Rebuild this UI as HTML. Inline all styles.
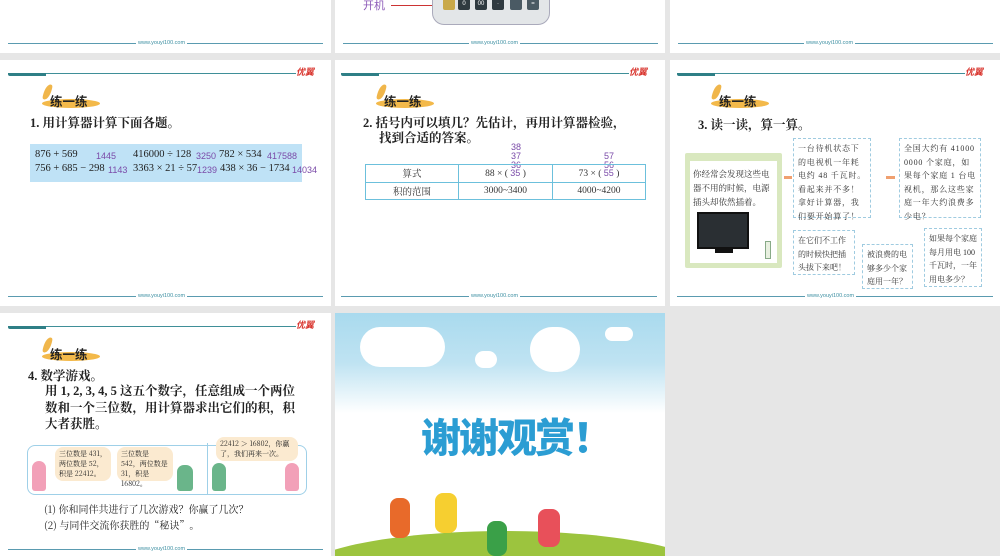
<!DOCTYPE html>
<html><head><meta charset="utf-8">
<style>
*{margin:0;padding:0;box-sizing:border-box}
body{width:1000px;height:556px;background:#e6e6e6;position:relative;overflow:hidden;font-family:"Liberation Serif","Noto Serif CJK SC",serif;color:#222}
.s{position:absolute;background:#fff;overflow:hidden}
.a{position:absolute;white-space:nowrap}
.hl{position:absolute;height:1px;background:#3f8f98}
.ht{position:absolute;height:3px;background:#2e7f86;border-radius:0 0 0 2px}
.logo{position:absolute;font:italic bold 9px "Liberation Sans","Noto Sans CJK SC",sans-serif;color:#d8312a}
.ft{position:absolute;font:5.5px "Liberation Sans",sans-serif;color:#3c8fa2;background:#fff;padding:0 2px}
.fl{position:absolute;height:1px;background:#5a9bb0}
.bdg{position:absolute;width:60px;height:28px}
.bdg .e{position:absolute;left:0;top:17px;width:58px;height:9px;border-radius:50%;background:#f3b94a}
.bdg .f{position:absolute;left:2px;top:2px;width:7px;height:16px;background:#f0b64b;border-radius:70% 20% 70% 20%;transform:rotate(15deg)}
.bdg .t{position:absolute;left:8px;top:9px;font:bold 12.5px "Liberation Sans","Noto Sans CJK SC",sans-serif;color:#222}
.ti{font:bold 12.5px "Liberation Serif","Noto Serif CJK SC",serif}
.pu{color:#7a4aa8;font:9px "Liberation Sans",sans-serif}
.n{font-size:10.5px}
.bub{position:absolute;background:#fff;border:1px dashed #9fcbe0;font:8px "Liberation Serif","Noto Serif CJK SC",serif;line-height:13.5px;padding:3px 4px;color:#333;white-space:normal;word-break:break-all;letter-spacing:0.8px}
.key{position:absolute;top:-2px;width:12px;height:12px;background:#2f3a40;border-radius:2px;color:#fff;font:6px sans-serif;text-align:center;line-height:12px}
.sp{position:absolute;background:#fbead0;border-radius:8px;font:7px 'Noto Serif CJK SC',serif;line-height:10px;padding:2px 4px;white-space:normal}
</style></head><body>

<!-- row0 -->
<div class="s" style="left:0;top:0;width:331px;height:53px">
 <div class="fl" style="left:8px;top:43px;width:315px"></div>
 <div class="ft" style="left:136px;top:40px">www.youyi100.com</div>
</div>
<div class="s" style="left:335px;top:0;width:330px;height:53px">
 <div class="a" style="left:28px;top:-3px;font:11px 'Noto Sans CJK SC',sans-serif;color:#8c5ab8">开机</div>
 <div class="a" style="left:56px;top:5px;width:50px;height:1px;background:#c33"></div>
 <div class="a" style="left:97px;top:-8px;width:118px;height:33px;background:#e3e6e8;border-radius:0 0 12px 12px;border:1px solid #aab"></div>
 <div class="key" style="left:108px;background:#c9a94a"></div>
 <div class="key" style="left:123px">0</div>
 <div class="key" style="left:140px">00</div>
 <div class="key" style="left:157px">·</div>
 <div class="key" style="left:175px;background:#4a5a64"></div>
 <div class="key" style="left:192px;background:#4a5a64">=</div>
 <div class="fl" style="left:8px;top:43px;width:315px"></div>
 <div class="ft" style="left:134px;top:40px">www.youyi100.com</div>
</div>
<div class="s" style="left:670px;top:0;width:330px;height:53px">
 <div class="fl" style="left:8px;top:43px;width:315px"></div>
 <div class="ft" style="left:134px;top:40px">www.youyi100.com</div>
</div>

<!-- row1 col1 -->
<div class="s" style="left:0;top:60px;width:331px;height:246px">
 <div class="hl" style="left:8px;top:13px;width:288px"></div>
 <div class="ht" style="left:8px;top:13px;width:38px"></div>
 <div class="logo" style="left:296px;top:5px">优翼</div>
 <div class="bdg" style="left:42px;top:22px"><div class="e"></div><div class="f"></div><div class="t">练一练</div></div>
 <div class="a ti" style="left:30px;top:53px">1. 用计算器计算下面各题。</div>
 <div class="a" style="left:30px;top:84px;width:272px;height:38px;background:#bfe2f6"></div>
 <div class="a n" style="left:35px;top:89px">876 + 569</div>
 <div class="a pu" style="left:96px;top:91px">1445</div>
 <div class="a n" style="left:133px;top:89px">416000 ÷ 128</div>
 <div class="a pu" style="left:196px;top:91px">3250</div>
 <div class="a n" style="left:219px;top:89px">782 × 534</div>
 <div class="a pu" style="left:267px;top:91px">417588</div>
 <div class="a n" style="left:35px;top:103px">756 + 685 − 298</div>
 <div class="a pu" style="left:108px;top:105px">1143</div>
 <div class="a n" style="left:133px;top:103px">3363 × 21 ÷ 57</div>
 <div class="a pu" style="left:197px;top:105px">1239</div>
 <div class="a n" style="left:220px;top:103px">438 × 36 − 1734</div>
 <div class="a pu" style="left:292px;top:105px">14034</div>
 <div class="fl" style="left:8px;top:236px;width:315px"></div>
 <div class="ft" style="left:136px;top:233px">www.youyi100.com</div>
</div>

<!-- row1 col2 -->
<div class="s" style="left:335px;top:60px;width:330px;height:246px">
 <div class="hl" style="left:6px;top:13px;width:288px"></div>
 <div class="ht" style="left:6px;top:13px;width:38px"></div>
 <div class="logo" style="left:294px;top:5px">优翼</div>
 <div class="bdg" style="left:41px;top:22px"><div class="e"></div><div class="f"></div><div class="t">练一练</div></div>
 <div class="a ti" style="left:28px;top:53px">2. 括号内可以填几？先估计，再用计算器检验，</div>
 <div class="a ti" style="left:44px;top:68px">找到合适的答案。</div>
 <div class="a pu" style="left:176px;top:83px;line-height:9px">38<br>37<br>36</div>
 <div class="a pu" style="left:269px;top:92px;line-height:9px">57<br>56</div>
 <table class="a" style="left:30px;top:104px;width:281px;height:36px;border-collapse:collapse;font-size:9.5px;text-align:center;color:#333">
  <tr><td style="border:1px solid #6cc0dc;width:93px">算式</td><td style="border:1px solid #6cc0dc;width:94px">88 × ( <span class="pu">35</span> )</td><td style="border:1px solid #6cc0dc">73 × ( <span class="pu">55</span> )</td></tr>
  <tr><td style="border:1px solid #6cc0dc">积的范围</td><td style="border:1px solid #6cc0dc">3000~3400</td><td style="border:1px solid #6cc0dc">4000~4200</td></tr>
 </table>
 <div class="fl" style="left:6px;top:236px;width:316px"></div>
 <div class="ft" style="left:134px;top:233px">www.youyi100.com</div>
</div>

<!-- row1 col3 -->
<div class="s" style="left:670px;top:60px;width:330px;height:246px">
 <div class="hl" style="left:7px;top:13px;width:288px"></div>
 <div class="ht" style="left:7px;top:13px;width:38px"></div>
 <div class="logo" style="left:295px;top:5px">优翼</div>
 <div class="bdg" style="left:41px;top:22px"><div class="e"></div><div class="f"></div><div class="t">练一练</div></div>
 <div class="a ti" style="left:28px;top:55px">3. 读一读，算一算。</div>
 <div class="a" style="left:15px;top:93px;width:97px;height:115px;background:#d9e8bf;border-radius:2px"></div>
 <div class="a" style="left:20px;top:101px;width:87px;height:102px;background:#fff"></div>
 <div class="a" style="left:23px;top:107px;width:84px;font:8.5px 'Noto Serif CJK SC',serif;line-height:14px;color:#333;white-space:normal">你经常会发现这些电器不用的时候，电源插头却依然插着。</div>
 <div class="a" style="left:27px;top:152px;width:52px;height:37px;background:#2a2f33;border:2px solid #111"></div>
 <div class="a" style="left:45px;top:189px;width:18px;height:4px;background:#111"></div>
 <div class="a" style="left:95px;top:181px;width:6px;height:18px;background:#e8f0e0;border:1px solid #8a8"></div>
 <div class="bub" style="left:123px;top:78px;width:78px;height:80px">一台待机状态下的电视机一年耗电约 48 千瓦时。看起来并不多！拿好计算器，我们要开始算了！</div>
 <div class="bub" style="left:229px;top:78px;width:82px;height:80px">全国大约有 410000000 个家庭，如果每个家庭 1 台电视机，那么这些家庭一年大约浪费多少电？</div>
 <div class="bub" style="left:254px;top:168px;width:58px;height:59px;letter-spacing:0">如果每个家庭每月用电 100 千瓦时，一年用电多少？</div>
 <div class="bub" style="left:192px;top:184px;width:51px;height:45px;letter-spacing:0">被浪费的电够多少个家庭用一年？</div>
 <div class="bub" style="left:123px;top:170px;width:62px;height:45px;letter-spacing:0">在它们不工作的时候快把插头拔下来吧！</div>
 <div class="a" style="left:114px;top:116px;width:8px;height:3px;background:#f0a070"></div>
 <div class="a" style="left:216px;top:116px;width:9px;height:3px;background:#f0a070"></div>
 <div class="fl" style="left:7px;top:236px;width:316px"></div>
 <div class="ft" style="left:135px;top:233px">www.youyi100.com</div>
</div>

<!-- row2 col1 -->
<div class="s" style="left:0;top:313px;width:331px;height:243px">
 <div class="hl" style="left:8px;top:13px;width:288px"></div>
 <div class="ht" style="left:8px;top:13px;width:38px"></div>
 <div class="logo" style="left:296px;top:5px">优翼</div>
 <div class="bdg" style="left:42px;top:22px"><div class="e"></div><div class="f"></div><div class="t">练一练</div></div>
 <div class="a ti" style="left:28px;top:53px">4. 数学游戏。</div>
 <div class="a ti" style="left:45px;top:70px;line-height:16.5px">用 1, 2, 3, 4, 5 这五个数字，任意组成一个两位<br>数和一个三位数，用计算器求出它们的积，积<br>大者获胜。</div>
 <div class="a" style="left:27px;top:132px;width:280px;height:50px;border:1px solid #9fd0e8;border-radius:8px;background:#fff"></div>
 <div class="a" style="left:207px;top:130px;width:1px;height:52px;background:#9fd0e8"></div>
 <div class="sp" style="left:55px;top:134px;width:56px;height:34px">三位数是 431，两位数是 52，积是 22412。</div>
 <div class="sp" style="left:117px;top:134px;width:56px;height:34px">三位数是 542，两位数是 31，积是 16802。</div>
 <div class="sp" style="left:216px;top:124px;width:82px;height:24px">22412 ＞ 16802，你赢了，我们再来一次。</div>
 <div class="a" style="left:32px;top:148px;width:14px;height:30px;background:#f2a0b8;border-radius:7px 7px 3px 3px"></div>
 <div class="a" style="left:177px;top:152px;width:16px;height:26px;background:#6ab58a;border-radius:7px 7px 3px 3px"></div>
 <div class="a" style="left:212px;top:150px;width:14px;height:28px;background:#6ab58a;border-radius:7px 7px 3px 3px"></div>
 <div class="a" style="left:285px;top:150px;width:14px;height:28px;background:#f2a0b8;border-radius:7px 7px 3px 3px"></div>
 <div class="a" style="left:44px;top:188px;font:10px 'Noto Serif CJK SC',serif;line-height:16px">(1) 你和同伴共进行了几次游戏？你赢了几次？<br>(2) 与同伴交流你获胜的“秘诀”。</div>
 <div class="fl" style="left:8px;top:236px;width:315px"></div>
 <div class="ft" style="left:136px;top:233px">www.youyi100.com</div>
</div>

<!-- row2 col2 -->
<div class="s" style="left:335px;top:313px;width:330px;height:243px;background:linear-gradient(#a9daee 0,#bfe3f2 50px,#fff 100px,#fff 190px)">
 <div class="a" style="left:25px;top:14px;width:85px;height:40px;background:#fff;border-radius:30px"></div>
 <div class="a" style="left:195px;top:14px;width:50px;height:45px;background:#fff;border-radius:25px"></div>
 <div class="a" style="left:140px;top:38px;width:22px;height:17px;background:#fff;border-radius:10px"></div>
 <div class="a" style="left:270px;top:14px;width:28px;height:14px;background:#fff;border-radius:8px"></div>
 <div class="a" style="left:86px;top:93px;font:900 40px 'Noto Sans CJK SC',sans-serif;color:#2b9dd3;letter-spacing:-2px">谢谢观赏！</div>
 <div class="a" style="left:-40px;top:218px;width:420px;height:90px;background:#9cc43e;border-radius:50%"></div>
 <div class="a" style="left:55px;top:185px;width:20px;height:40px;background:#e86a2a;border-radius:8px"></div>
 <div class="a" style="left:100px;top:180px;width:22px;height:40px;background:#f6cf30;border-radius:8px"></div>
 <div class="a" style="left:152px;top:208px;width:20px;height:35px;background:#3aa048;border-radius:8px"></div>
 <div class="a" style="left:203px;top:196px;width:22px;height:38px;background:#e8505a;border-radius:8px"></div>
</div>

</body></html>
